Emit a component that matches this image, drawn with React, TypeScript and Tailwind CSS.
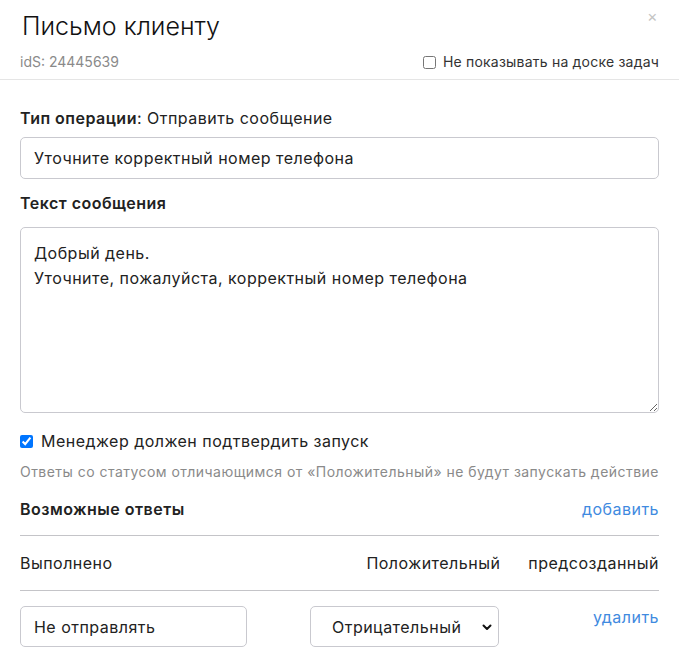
import React from 'react';

const font = { fontFamily: 'Inter, "Noto Sans", sans-serif', letterSpacing: '0.03em' };

export default function App() {
  return (
    <div className="w-[679px] h-[656px] bg-white overflow-hidden text-[#222]" style={font}>
      {/* Header */}
      <div className="relative border-b border-[#e5e5e5] px-5 pt-[8px] pb-[7px]">
        <h1 className="text-[25px] font-light leading-[36px] text-[#111] pl-[2px] tracking-normal">Письмо клиенту</h1>
        <button className="absolute top-[6px] right-[21px] text-[#c4c4c4] text-[16px] leading-5">×</button>
        <div className="flex items-center justify-between mt-[8px]">
          <span className="text-[14px] text-[#8a8a8a] leading-5 tracking-normal">idS: 24445639</span>
          <label className="flex items-center gap-[7px] text-[14px] text-[#333] leading-5 tracking-[0.015em]">
            <input type="checkbox" className="w-[13px] h-[13px] m-0" />
            Не показывать на доске задач
          </label>
        </div>
      </div>

      <div className="px-5 pt-[28px]">
        <div className="text-[16px] leading-5">
          <span className="font-semibold">Тип операции</span>: Отправить сообщение
        </div>
        <input
          defaultValue="Уточните корректный номер телефона"
          className="mt-[9px] w-full h-[42px] border border-[#c9c9cf] rounded-[5px] px-[13px] text-[16px] text-[#222] outline-none"
        />

        <div className="mt-[14px] text-[16px] font-semibold leading-5">Текст сообщения</div>
        <textarea
          defaultValue={'Добрый день.\nУточните, пожалуйста, корректный номер телефона'}
          className="mt-[14px] block w-full h-[186px] border border-[#c9c9cf] rounded-[5px] px-[13px] pt-[13px] text-[16px] leading-[25px] text-[#222] outline-none resize-y"
        />

        <label className="mt-[18px] flex items-center gap-[8px] text-[16px] leading-5">
          <input type="checkbox" defaultChecked className="w-[13px] h-[13px] m-0" />
          Менеджер должен подтвердить запуск
        </label>
        <div className="mt-[11px] text-[14px] leading-5 text-[#8a8a8a] whitespace-nowrap tracking-[0.033em]">
          Ответы со статусом отличающимся от «Положительный» не будут запускать действие
        </div>

        <div className="mt-[17px] flex items-center justify-between pb-[16px] border-b border-[#c4c4c8]">
          <span className="text-[16px] font-semibold leading-5">Возможные ответы</span>
          <a className="text-[16px] text-[#3f8ae0] leading-5">добавить</a>
        </div>

        <div className="flex items-center py-[17px] border-b border-[#c4c4c8] text-[16px] leading-5">
          <span className="flex-1">Выполнено</span>
          <span>Положительный</span>
          <span className="ml-[28px]">предсозданный</span>
        </div>

        <div className="flex items-start pt-[15px]">
          <input
            defaultValue="Не отправлять"
            className="w-[227px] h-[41px] border border-[#c9c9cf] rounded-[5px] px-[13px] text-[16px] text-[#222] outline-none"
          />
          <div className="relative ml-[63px] w-[189px]">
            <select className="w-full h-[41px] appearance-none border border-[#c9c9cf] rounded-[5px] pl-[21px] text-[16px] text-[#222] bg-white outline-none">
              <option>Отрицательный</option>
            </select>
            <svg className="absolute right-[6px] top-[15px] pointer-events-none" width="12" height="12" viewBox="0 0 12 12">
              <path d="M2.5 4.5 L6 8 L9.5 4.5" fill="none" stroke="#111" strokeWidth="2" strokeLinecap="round" strokeLinejoin="round" />
            </svg>
          </div>
          <a className="ml-auto mt-[1px] text-[16px] text-[#3f8ae0] leading-5">удалить</a>
        </div>
      </div>
    </div>
  );
}
